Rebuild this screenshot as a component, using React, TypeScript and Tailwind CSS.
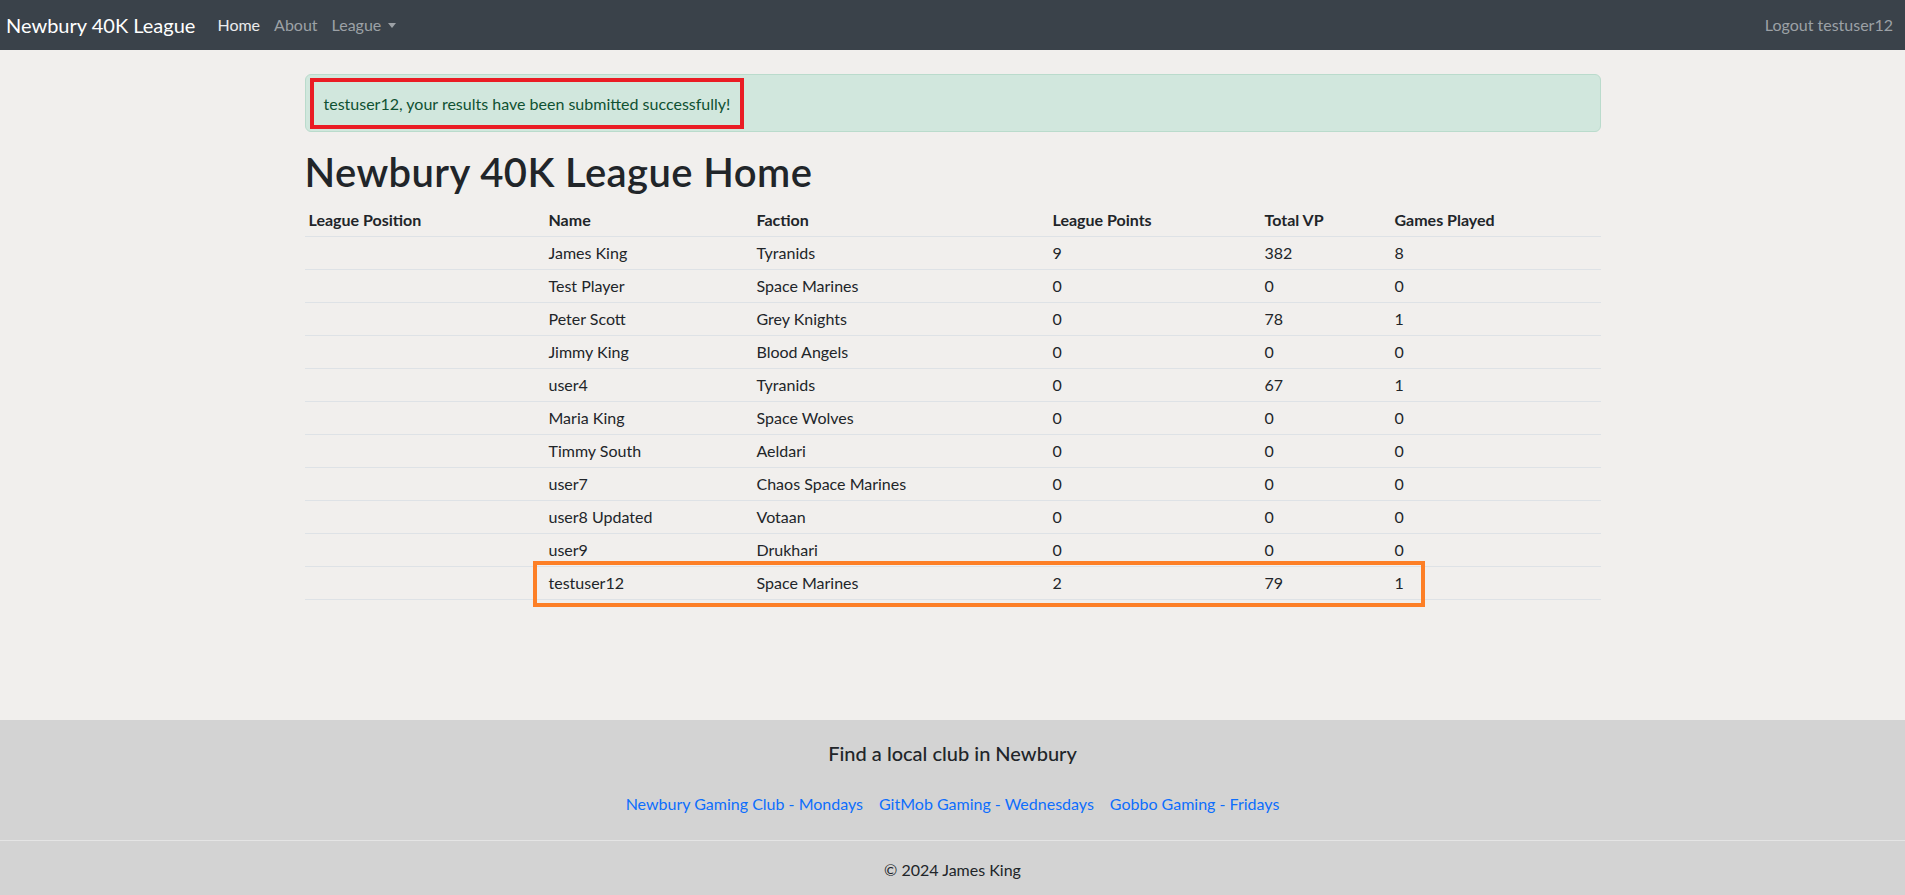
import { useState } from "react";

type Row = { name: string; faction: string; points: number; vp: number; played: number };

const rows: Row[] = [
  { name: "James King", faction: "Tyranids", points: 9, vp: 382, played: 8 },
  { name: "Test Player", faction: "Space Marines", points: 0, vp: 0, played: 0 },
  { name: "Peter Scott", faction: "Grey Knights", points: 0, vp: 78, played: 1 },
  { name: "Jimmy King", faction: "Blood Angels", points: 0, vp: 0, played: 0 },
  { name: "user4", faction: "Tyranids", points: 0, vp: 67, played: 1 },
  { name: "Maria King", faction: "Space Wolves", points: 0, vp: 0, played: 0 },
  { name: "Timmy South", faction: "Aeldari", points: 0, vp: 0, played: 0 },
  { name: "user7", faction: "Chaos Space Marines", points: 0, vp: 0, played: 0 },
  { name: "user8 Updated", faction: "Votaan", points: 0, vp: 0, played: 0 },
  { name: "user9", faction: "Drukhari", points: 0, vp: 0, played: 0 },
  { name: "testuser12", faction: "Space Marines", points: 2, vp: 79, played: 1 },
];

function Navbar() {
  return (
    <nav className="h-[50px] bg-[#3a424a] flex items-center justify-between pl-[6px] pr-[12px]">
      <div className="flex items-center">
        <a className="text-[20px] text-white mr-[18px]">Newbury 40K League</a>
        <a className="text-[16px] text-white/90 px-[4px] mr-[6px]">Home</a>
        <a className="text-[16px] text-[#9ca1a6] px-[4px] mr-[6px]">About</a>
        <a className="text-[16px] text-[#9ca1a6] px-[4px] flex items-center">
          League
          <span className="ml-[7px] inline-block border-t-[5px] border-t-[#9ca1a6] border-x-[4px] border-x-transparent" />
        </a>
      </div>
      <a className="text-[16px] text-[#9ca1a6]">Logout testuser12</a>
    </nav>
  );
}

function LeagueTable() {
  const th = "text-left font-bold px-[4px] py-[4px] border-b border-[#dee2e6]";
  const td = "px-[4px] py-[4px] border-b border-[#dee2e6]";
  return (
    <div className="relative">
      <table className="w-full text-[16px] leading-[24px] text-[#212529] border-collapse">
        <thead>
          <tr>
            <th className={`${th} w-[240px]`}>League Position</th>
            <th className={`${th} w-[208px]`}>Name</th>
            <th className={`${th} w-[296px]`}>Faction</th>
            <th className={`${th} w-[212px]`}>League Points</th>
            <th className={`${th} w-[130px]`}>Total VP</th>
            <th className={th}>Games Played</th>
          </tr>
        </thead>
        <tbody>
          {rows.map((r) => (
            <tr key={r.name}>
              <td className={td}></td>
              <td className={td}>{r.name}</td>
              <td className={td}>{r.faction}</td>
              <td className={td}>{r.points}</td>
              <td className={td}>{r.vp}</td>
              <td className={td}>{r.played}</td>
            </tr>
          ))}
        </tbody>
      </table>
      {/* highlight drawn over the last row */}
      <div className="absolute left-[228px] right-[176px] bottom-[-7px] h-[46px] border-[4px] border-[#fd7f26] pointer-events-none" />
    </div>
  );
}

export default function App() {
  const [user] = useState("testuser12");
  return (
    <div className="min-h-screen flex flex-col bg-[#f1efed] font-['Lato',sans-serif]">
      <Navbar />
      <main className="flex-1">
        <div className="w-[1296px] mx-auto pt-[24px]">
          <div className="h-[58px] rounded-[6px] border border-[#badbcc] bg-[#d1e7dd] text-[#0f5132] flex items-center pl-[4px] mb-[16px]">
            <div className="h-[51px] border-[4px] border-[#ea1c24] flex items-center px-[10px] pt-[1px]">
              {user}, your results have been submitted successfully!
            </div>
          </div>
          <h1 className="text-[40px] leading-[48px] font-semibold tracking-[0.4px] text-[#212529] mb-[8px]">Newbury 40K League Home</h1>
          <LeagueTable />
        </div>
      </main>
      <footer className="h-[175px] bg-[#d3d3d3] text-[#212529] text-center pt-[21px]">
        <h5 className="text-[20px] leading-[24px] font-medium">Find a local club in Newbury</h5>
        <div className="mt-[27px] flex justify-center gap-[16px] text-[16px] leading-[24px] text-[#0d6efd]">
          <a>Newbury Gaming Club - Mondays</a>
          <a>GitMob Gaming - Wednesdays</a>
          <a>Gobbo Gaming - Fridays</a>
        </div>
        <div className="mt-[24px] border-t border-[#e4e4e4]" />
        <p className="mt-[17px] text-[16px] leading-[24px]">© 2024 James King</p>
      </footer>
    </div>
  );
}
